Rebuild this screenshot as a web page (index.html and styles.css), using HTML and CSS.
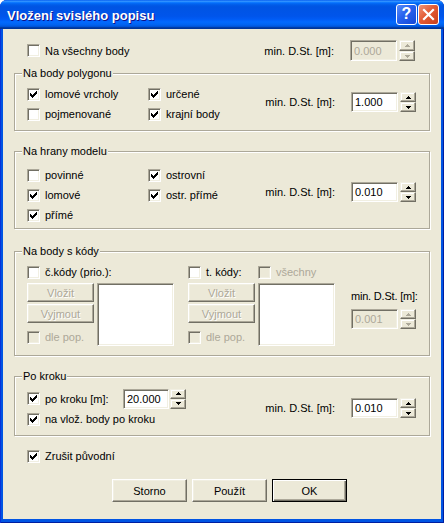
FILE: index.html
```html
<!DOCTYPE html>
<html lang="cs">
<head>
<meta charset="utf-8">
<title>Vložení svislého popisu</title>
<link rel="stylesheet" href="styles.css">
</head>
<body>
<div class="window">
  <div class="titlebar">
    <span class="title">Vložení svislého popisu</span>
    <div class="tbuttons">
      <span class="tb help">?</span>
      <span class="tb close"><svg width="13" height="13" viewBox="0 0 13 13"><path d="M2 2 L11 11 M11 2 L2 11" stroke="#fff" stroke-width="2.2" stroke-linecap="square"/></svg></span>
    </div>
  </div>
  <div class="client">
    <div class="toprow">
      <div class="chk"><span class="box"></span><span>Na všechny body</span></div>
      <div class="mind">
        <span class="mlabel">min. D.St. [m]:</span>
        <span class="edit dis">0.000</span>
        <span class="updown"><span class="ud"><svg width="5" height="3" viewBox="0 0 5 3"><path d="M2 0h1v1h1v1h1v1H0V2h1V1h1z" fill="#ACA899"/></svg></span><span class="ud"><svg width="5" height="3" viewBox="0 0 5 3"><path d="M0 0h5v1H4v1H3v1H2V2H1V1H0z" fill="#ACA899"/></svg></span></span>
      </div>
    </div>

    <div class="group g1">
      <span class="legend">Na body polygonu</span>
      <div class="checks">
        <div class="chk"><span class="box"><svg width="9" height="9" viewBox="0 0 9 9"><path d="M1 3h1v3H1zM2 4h1v3H2zM3 5h1v3H3zM4 4h1v3H4zM5 3h1v3H5zM6 2h1v3H6zM7 1h1v3H7z" fill="#000"/></svg></span><span>lomové vrcholy</span></div>
        <div class="chk"><span class="box"><svg width="9" height="9" viewBox="0 0 9 9"><path d="M1 3h1v3H1zM2 4h1v3H2zM3 5h1v3H3zM4 4h1v3H4zM5 3h1v3H5zM6 2h1v3H6zM7 1h1v3H7z" fill="#000"/></svg></span><span>určené</span></div>
        <div class="chk"><span class="box"></span><span>pojmenované</span></div>
        <div class="chk"><span class="box"><svg width="9" height="9" viewBox="0 0 9 9"><path d="M1 3h1v3H1zM2 4h1v3H2zM3 5h1v3H3zM4 4h1v3H4zM5 3h1v3H5zM6 2h1v3H6zM7 1h1v3H7z" fill="#000"/></svg></span><span>krajní body</span></div>
      </div>
      <div class="mind m1">
        <span class="mlabel">min. D.St. [m]:</span>
        <span class="edit">1.000</span>
        <span class="updown"><span class="ud"><svg width="5" height="3" viewBox="0 0 5 3"><path d="M2 0h1v1h1v1h1v1H0V2h1V1h1z" fill="#000"/></svg></span><span class="ud"><svg width="5" height="3" viewBox="0 0 5 3"><path d="M0 0h5v1H4v1H3v1H2V2H1V1H0z" fill="#000"/></svg></span></span>
      </div>
    </div>

    <div class="group g2">
      <span class="legend">Na hrany modelu</span>
      <div class="checks">
        <div class="chk"><span class="box"></span><span>povinné</span></div>
        <div class="chk"><span class="box"><svg width="9" height="9" viewBox="0 0 9 9"><path d="M1 3h1v3H1zM2 4h1v3H2zM3 5h1v3H3zM4 4h1v3H4zM5 3h1v3H5zM6 2h1v3H6zM7 1h1v3H7z" fill="#000"/></svg></span><span>ostrovní</span></div>
        <div class="chk"><span class="box"><svg width="9" height="9" viewBox="0 0 9 9"><path d="M1 3h1v3H1zM2 4h1v3H2zM3 5h1v3H3zM4 4h1v3H4zM5 3h1v3H5zM6 2h1v3H6zM7 1h1v3H7z" fill="#000"/></svg></span><span>lomové</span></div>
        <div class="chk"><span class="box"><svg width="9" height="9" viewBox="0 0 9 9"><path d="M1 3h1v3H1zM2 4h1v3H2zM3 5h1v3H3zM4 4h1v3H4zM5 3h1v3H5zM6 2h1v3H6zM7 1h1v3H7z" fill="#000"/></svg></span><span>ostr. přímé</span></div>
        <div class="chk"><span class="box"><svg width="9" height="9" viewBox="0 0 9 9"><path d="M1 3h1v3H1zM2 4h1v3H2zM3 5h1v3H3zM4 4h1v3H4zM5 3h1v3H5zM6 2h1v3H6zM7 1h1v3H7z" fill="#000"/></svg></span><span>přímé</span></div>
      </div>
      <div class="mind m2">
        <span class="mlabel">min. D.St. [m]:</span>
        <span class="edit">0.010</span>
        <span class="updown"><span class="ud"><svg width="5" height="3" viewBox="0 0 5 3"><path d="M2 0h1v1h1v1h1v1H0V2h1V1h1z" fill="#000"/></svg></span><span class="ud"><svg width="5" height="3" viewBox="0 0 5 3"><path d="M0 0h5v1H4v1H3v1H2V2H1V1H0z" fill="#000"/></svg></span></span>
      </div>
    </div>

    <div class="group g3">
      <span class="legend">Na body s kódy</span>
      <div class="kblock">
        <div class="chk"><span class="box"></span><span>č.kódy (prio.):</span></div>
        <div class="kbody">
          <div class="btncol">
            <span class="pbtn">Vložit</span>
            <span class="pbtn">Vyjmout</span>
            <div class="chk dis"><span class="box"></span><span>dle pop.</span></div>
          </div>
          <div class="list"></div>
        </div>
      </div>
      <div class="kblock">
        <div class="krow">
          <div class="chk tk"><span class="box"></span><span>t. kódy:</span></div>
          <div class="chk dis"><span class="box"></span><span>všechny</span></div>
        </div>
        <div class="kbody">
          <div class="btncol">
            <span class="pbtn">Vložit</span>
            <span class="pbtn">Vyjmout</span>
            <div class="chk dis"><span class="box"></span><span>dle pop.</span></div>
          </div>
          <div class="list"></div>
        </div>
      </div>
      <div class="kmind">
        <span class="klabel">min. D.St. [m]:</span>
        <div class="mind">
          <span class="edit dis">0.001</span>
          <span class="updown"><span class="ud"><svg width="5" height="3" viewBox="0 0 5 3"><path d="M2 0h1v1h1v1h1v1H0V2h1V1h1z" fill="#ACA899"/></svg></span><span class="ud"><svg width="5" height="3" viewBox="0 0 5 3"><path d="M0 0h5v1H4v1H3v1H2V2H1V1H0z" fill="#ACA899"/></svg></span></span>
        </div>
      </div>
    </div>

    <div class="group g4">
      <span class="legend">Po kroku</span>
      <div class="krcol">
        <div class="krrow">
          <div class="chk kr"><span class="box"><svg width="9" height="9" viewBox="0 0 9 9"><path d="M1 3h1v3H1zM2 4h1v3H2zM3 5h1v3H3zM4 4h1v3H4zM5 3h1v3H5zM6 2h1v3H6zM7 1h1v3H7z" fill="#000"/></svg></span><span>po kroku [m]:</span></div>
          <span class="edit e20">20.000</span>
          <span class="updown"><span class="ud"><svg width="5" height="3" viewBox="0 0 5 3"><path d="M2 0h1v1h1v1h1v1H0V2h1V1h1z" fill="#000"/></svg></span><span class="ud"><svg width="5" height="3" viewBox="0 0 5 3"><path d="M0 0h5v1H4v1H3v1H2V2H1V1H0z" fill="#000"/></svg></span></span>
        </div>
        <div class="chk"><span class="box"><svg width="9" height="9" viewBox="0 0 9 9"><path d="M1 3h1v3H1zM2 4h1v3H2zM3 5h1v3H3zM4 4h1v3H4zM5 3h1v3H5zM6 2h1v3H6zM7 1h1v3H7z" fill="#000"/></svg></span><span>na vlož. body po kroku</span></div>
      </div>
      <div class="mind m4">
        <span class="mlabel">min. D.St. [m]:</span>
        <span class="edit">0.010</span>
        <span class="updown"><span class="ud"><svg width="5" height="3" viewBox="0 0 5 3"><path d="M2 0h1v1h1v1h1v1H0V2h1V1h1z" fill="#000"/></svg></span><span class="ud"><svg width="5" height="3" viewBox="0 0 5 3"><path d="M0 0h5v1H4v1H3v1H2V2H1V1H0z" fill="#000"/></svg></span></span>
      </div>
    </div>

    <div class="chk zrusit"><span class="box"><svg width="9" height="9" viewBox="0 0 9 9"><path d="M1 3h1v3H1zM2 4h1v3H2zM3 5h1v3H3zM4 4h1v3H4zM5 3h1v3H5zM6 2h1v3H6zM7 1h1v3H7z" fill="#000"/></svg></span><span>Zrušit původní</span></div>

    <div class="actions">
      <span class="dbtn">Storno</span>
      <span class="dbtn">Použít</span>
      <span class="dbtn def">OK</span>
    </div>
  </div>
</div>
</body>
</html>
```

FILE: styles.css
```css
* { box-sizing: border-box; }
html, body { margin: 0; padding: 0; }
body {
  font-family: "Liberation Sans", Arial, sans-serif;
  font-size: 11px;
  color: #000;
  background: #fff;
}
.window {
  width: 444px;
  height: 523px;
  background: #0054E3;
  border-radius: 7px 7px 0 0;
  overflow: hidden;
  box-shadow: inset 1px 0 #0831D9, inset -1px 0 #001EA0, inset 0 -1px #001EA0;
}
.titlebar {
  height: 29px;
  display: flex;
  align-items: center;
  justify-content: space-between;
  padding: 0 5px 0 7px;
  background: linear-gradient(to bottom, #0058EE 0%, #3593FF 4%, #288EFF 6%, #127DFF 8%, #036FFC 10%, #0262EE 14%, #0057E5 20%, #0054E3 24%, #0055EB 56%, #005BF5 66%, #026AFE 76%, #0062EF 86%, #0052D6 92%, #0040AB 94%, #003092 100%);
}
.title {
  color: #fff;
  font-weight: bold;
  font-size: 13px;
  text-shadow: 1px 1px #0F1089;
  margin-top: 1px;
}
.tbuttons { display: flex; gap: 1px; margin-top: -1px; }
.tb {
  width: 21px;
  height: 21px;
  border: 1px solid #fff;
  border-radius: 3px;
  display: flex;
  align-items: center;
  justify-content: center;
  color: #fff;
}
.help {
  background: linear-gradient(135deg, #5A8CF8 0%, #2661EE 45%, #1447D6 100%);
  font-weight: bold;
  font-size: 16px;
  line-height: 1;
}
.close {
  background: linear-gradient(135deg, #F0957A 0%, #E35B35 45%, #C8401C 100%);
}
.client {
  background: #ECE9D8;
  margin: 0 3px;
  height: 490px;
  padding: 11px 11px 0;
}

/* checkboxes */
.chk {
  display: flex;
  align-items: center;
  gap: 5px;
  height: 20px;
  white-space: nowrap;
}
.box {
  width: 13px;
  height: 13px;
  flex: none;
  background: #fff;
  border: 1px solid;
  border-color: #ACA899 #fff #fff #ACA899;
  box-shadow: inset 1px 1px #716F64, inset -1px -1px #F1EFE2;
  padding: 1px;
  display: block;
}
.box svg { display: block; }
.chk.dis { color: #ACA899; }
.chk.dis .box { background: #ECE9D8; }

/* edit + spinner */
.mind { display: flex; align-items: center; }
.mlabel { margin-right: 16px; white-space: nowrap; }
.edit {
  width: 47px;
  height: 20px;
  background: #fff;
  border: 1px solid;
  border-color: #ACA899 #fff #fff #ACA899;
  box-shadow: inset 1px 1px #716F64, inset -1px -1px #F1EFE2;
  padding: 0 0 0 3px;
  display: flex;
  align-items: center;
  font-size: 11px;
}
.edit.dis { background: #ECE9D8; color: #ACA899; }
.updown {
  width: 16px;
  height: 20px;
  margin-left: 2px;
  display: flex;
  flex-direction: column;
}
.ud {
  height: 10px;
  background: #ECE9D8;
  border: 1px solid;
  border-color: #F1EFE2 #716F64 #716F64 #F1EFE2;
  box-shadow: inset -1px -1px #ACA899, inset 1px 1px #fff;
  display: flex;
  align-items: center;
  justify-content: center;
}
.ud svg { display: block; }

.toprow {
  height: 21px;
  display: flex;
  align-items: center;
  justify-content: space-between;
  padding: 0 15px 0 13px;
}
.toprow .edit, .toprow .updown { height: 21px; }
.toprow .ud:first-child { height: 11px; }

/* group boxes */
.group {
  position: relative;
  border: 1px solid #ACA899;
  box-shadow: inset 1px 1px #fff, 1px 1px #fff;
  display: flex;
  justify-content: space-between;
  align-items: flex-start;
  padding-left: 12px;
  padding-right: 13px;
}
.legend {
  position: absolute;
  top: -7px;
  left: 7px;
  padding: 0 1px;
  background: #ECE9D8;
  line-height: 13px;
}
.checks {
  display: grid;
  grid-template-columns: 121px auto;
  grid-auto-rows: 20px;
}
.g1 { margin-top: 12px; padding-top: 10px; padding-bottom: 6px; }
.m1 { margin-top: 8px; }
.g2 { margin-top: 20px; padding-top: 13px; padding-bottom: 3px; }
.m2 { margin-top: 17px; }
.g3 { margin-top: 22px; padding-top: 10px; padding-bottom: 8px; justify-content: flex-start; }
.g4 { margin-top: 20px; padding-top: 11px; padding-bottom: 6px; }
.m4 { margin-top: 10px; }

/* kódy */
.kblock { width: 147px; margin-right: 14px; }
.krow { display: flex; }
.tk { width: 70px; }
.kbody { display: flex; margin-top: 1px; }
.btncol { width: 67px; display: flex; flex-direction: column; gap: 2px; }
.btncol .chk { margin-top: 2px; }
.pbtn {
  height: 19px;
  display: flex;
  align-items: center;
  justify-content: center;
  color: #ACA899;
  text-shadow: 1px 1px #fff;
  background: #ECE9D8;
  border: 1px solid;
  border-color: #fff #716F64 #716F64 #fff;
  box-shadow: inset -1px -1px #ACA899, inset 1px 1px #F1EFE2;
}
.list {
  width: 77px;
  height: 63px;
  margin-left: 3px;
  background: #fff;
  border: 1px solid;
  border-color: #ACA899 #fff #fff #ACA899;
  box-shadow: inset 1px 1px #716F64, inset -1px -1px #F1EFE2;
}
.kmind { margin-left: 2px; margin-top: 28px; }
.klabel { display: block; line-height: 13px; margin-bottom: 6px; white-space: nowrap; letter-spacing: -0.2px; }

/* po kroku */
.krrow { display: flex; align-items: center; height: 21px; }
.kr { width: 96px; }
.e20 { width: 46px; height: 20px; }
.krrow .updown { margin-left: 1px; }

.zrusit { margin-top: 10px; margin-left: 13px; }

.actions {
  display: flex;
  gap: 5px;
  margin-top: 13px;
  margin-left: 98px;
}
.dbtn {
  width: 75px;
  height: 23px;
  display: flex;
  align-items: center;
  justify-content: center;
  font-size: 11px;
  background: #ECE9D8;
  border: 1px solid;
  border-color: #fff #716F64 #716F64 #fff;
  box-shadow: inset -1px -1px #ACA899, inset 1px 1px #F1EFE2;
}
.dbtn.def {
  border: 1px solid #000;
  box-shadow: inset 1px 1px #fff, inset -1px -1px #716F64, inset -2px -2px #ACA899;
}
```
